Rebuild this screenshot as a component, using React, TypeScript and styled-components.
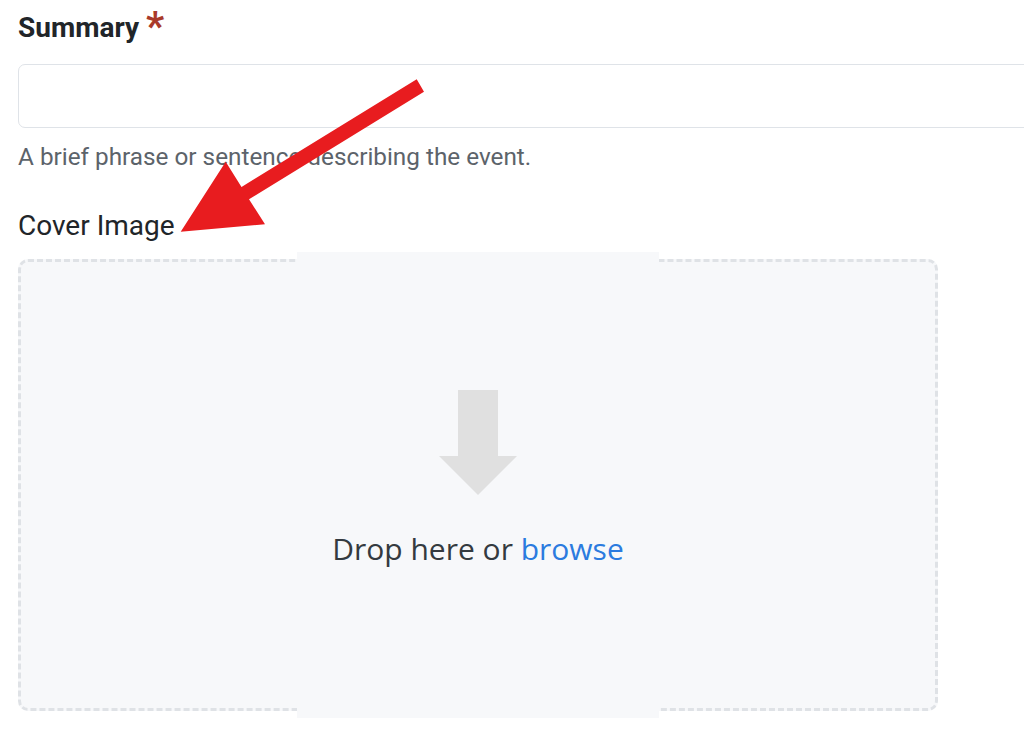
import React from 'react';
import styled, { createGlobalStyle } from 'styled-components';

const GlobalStyle = createGlobalStyle`
  html, body {
    margin: 0;
    padding: 0;
    background-color: #ffffff;
    overflow: hidden;
    font-family: 'Roboto', 'Liberation Sans', sans-serif;
  }
`;

const Page = styled.div`
  position: relative;
  padding: 11px 0 0 18px;
  width: 1024px;
  height: 746px;
  box-sizing: border-box;
  overflow: hidden;
`;

const Field = styled.div<{ $top?: number }>`
  display: flex;
  flex-direction: column;
  margin-top: ${(p) => p.$top ?? 0}px;
`;

const Label = styled.label<{ $bold?: boolean; $below?: number }>`
  display: block;
  font-size: 28px;
  line-height: 1.2;
  font-weight: ${(p) => (p.$bold ? 700 : 400)};
  color: #212529;
  margin-bottom: ${(p) => p.$below ?? 19}px;
`;

const Required = styled.span`
  color: #a93a2a;
  font-size: 40px;
  font-weight: 700;
  vertical-align: -3px;
  line-height: 0;
  margin-left: 7px;
`;

const TextInput = styled.input`
  display: block;
  width: 1100px;
  height: 64px;
  box-sizing: border-box;
  border: 1.5px solid #dfe3e8;
  border-radius: 7px;
  background: #ffffff;
  outline: none;
  font: inherit;
`;

const Help = styled.div`
  font-size: 24.3px;
  line-height: 1.2;
  color: #5c636a;
  margin-top: 14px;
`;

const DropZone = styled.div`
  width: 920px;
  height: 452px;
  box-sizing: border-box;
  border: 3px dashed #dfe2e6;
  border-radius: 10px;
  background: #f7f8fa;
  display: flex;
  align-items: center;
  justify-content: center;
`;

const DropInner = styled.div`
  width: 362px;
  height: 466px;
  flex-shrink: 0;
  background: #f7f8fa;
  display: flex;
  flex-direction: column;
  align-items: center;
  justify-content: center;
  gap: 36px;
  padding-bottom: 13px;
  box-sizing: border-box;
`;

const DropText = styled.div`
  font-family: 'Open Sans', 'Noto Sans', sans-serif;
  font-size: 30px;
  line-height: 36px;
  color: #343a40;
  white-space: nowrap;
`;

const Browse = styled.span`
  color: #2b7bdf;
  cursor: pointer;
`;

const Overlay = styled.svg`
  position: absolute;
  left: 0;
  top: 0;
  pointer-events: none;
`;

function DownArrow() {
  return (
    <svg width="78" height="105" viewBox="0 0 78 105">
      <polygon points="19,0 59,0 59,66 78,66 39,105 0,66 19,66" fill="#e0e0e0" />
    </svg>
  );
}

export default function App() {
  return (
    <>
      <GlobalStyle />
      <Page>
        <Field>
          <Label $bold>
            Summary<Required>*</Required>
          </Label>
          <TextInput type="text" />
          <Help>A brief phrase or sentence describing the event.</Help>
        </Field>
        <Field $top={38}>
          <Label $below={17}>Cover Image</Label>
          <DropZone>
            <DropInner>
              <DownArrow />
              <DropText>
                Drop here or <Browse>browse</Browse>
              </DropText>
            </DropInner>
          </DropZone>
        </Field>
        <Overlay width="1024" height="746" viewBox="0 0 1024 746">
          <polygon
            points="416.7,79.3 424,91.7 249,199.2 265,224.3 180.7,231.7 225.7,161.7 241.5,186.9"
            fill="#e81c1f"
          />
        </Overlay>
      </Page>
    </>
  );
}
